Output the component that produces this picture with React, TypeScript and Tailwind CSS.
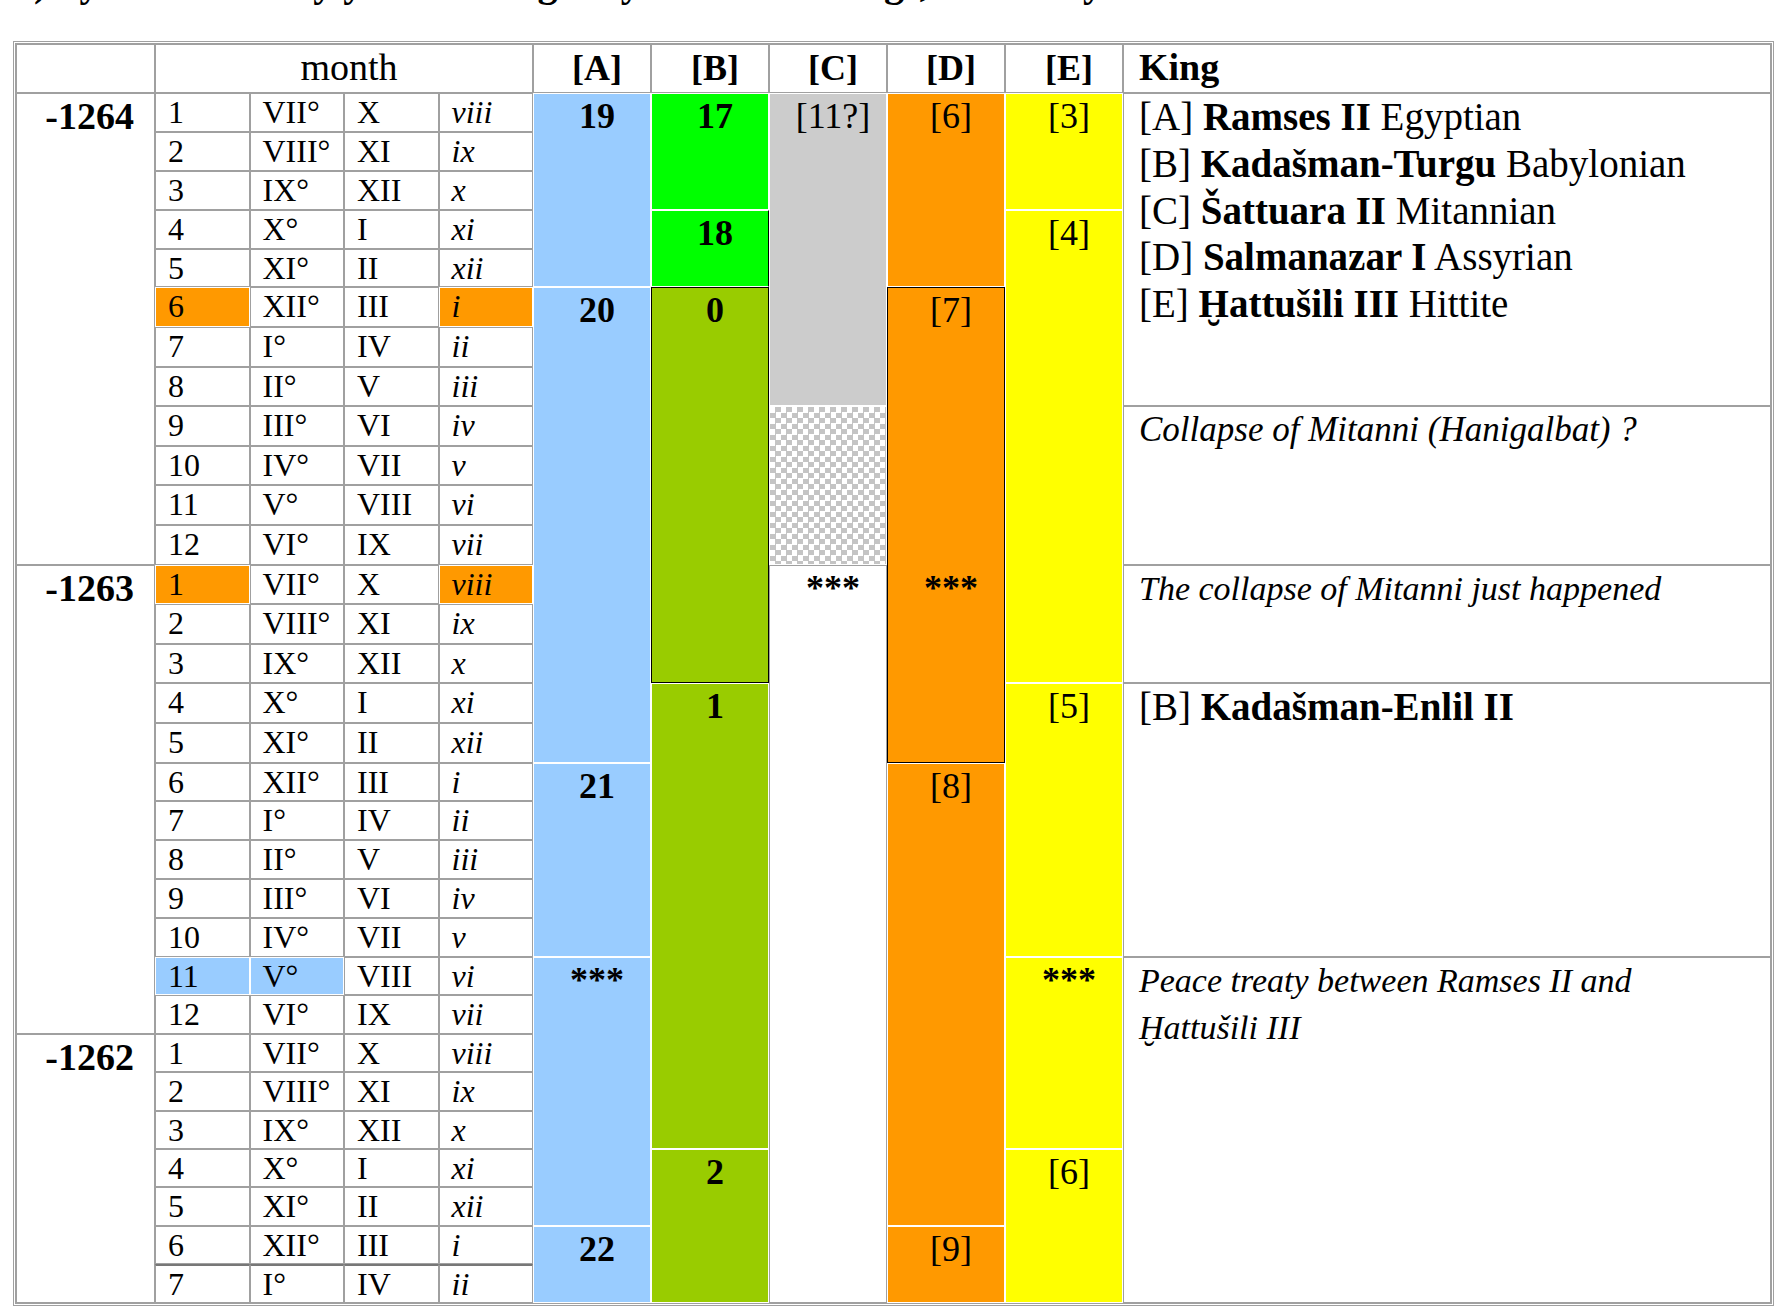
import React from 'react'

const MON2 = ['VII°', 'VIII°', 'IX°', 'X°', 'XI°', 'XII°', 'I°', 'II°', 'III°', 'IV°', 'V°', 'VI°']
const MON3 = ['X', 'XI', 'XII', 'I', 'II', 'III', 'IV', 'V', 'VI', 'VII', 'VIII', 'IX']
const MON4 = ['viii', 'ix', 'x', 'xi', 'xii', 'i', 'ii', 'iii', 'iv', 'v', 'vi', 'vii']

interface Block {
  place: string
  label?: string
  bold?: boolean
  cls: string
}

const BLUE = 'bg-[#99ccff] border-white'
const GREEN = 'bg-[#00ff00] border-white'
const OLIVE = 'bg-[#99cc00] border-white'
const ORANGE = 'bg-[#ff9900] border-white'
const YELLOW = 'bg-[#ffff00] border-white'
const CHECKER =
  'bg-[conic-gradient(#c4c4c4_25%,#ffffff_0_50%,#c4c4c4_0_75%,#ffffff_0)] bg-[length:11px_11px] border-white'

// reign blocks, placed on the body grid (col 6..10 = [A]..[E])
const blocks: Block[] = [
  { place: 'col-start-6 row-start-1 row-span-5', label: '19', bold: true, cls: BLUE },
  { place: 'col-start-6 row-start-6 row-span-12', label: '20', bold: true, cls: BLUE },
  { place: 'col-start-6 row-start-18 row-span-5', label: '21', bold: true, cls: BLUE },
  { place: 'col-start-6 row-start-23 row-span-7', label: '***', bold: true, cls: BLUE },
  { place: 'col-start-6 row-start-30 row-span-2', label: '22', bold: true, cls: BLUE },

  { place: 'col-start-7 row-start-1 row-span-3', label: '17', bold: true, cls: GREEN },
  { place: 'col-start-7 row-start-4 row-span-2', label: '18', bold: true, cls: 'bg-[#00ff00] border-white border-r-black' },
  { place: 'col-start-7 row-start-6 row-span-10', label: '0', bold: true, cls: 'bg-[#99cc00] border-black' },
  { place: 'col-start-7 row-start-16 row-span-12', label: '1', bold: true, cls: OLIVE },
  { place: 'col-start-7 row-start-28 row-span-4', label: '2', bold: true, cls: OLIVE },

  { place: 'col-start-8 row-start-1 row-span-8', label: '[11?]', cls: 'bg-[#cccccc] border-white' },
  { place: 'col-start-8 row-start-9 row-span-4', cls: CHECKER },
  { place: 'col-start-8 row-start-13 row-span-19', label: '***', bold: true, cls: 'bg-white border-[#a0a0a0]' },

  { place: 'col-start-9 row-start-1 row-span-5', label: '[6]', cls: ORANGE },
  { place: 'col-start-9 row-start-6 row-span-12', label: '[7]', cls: 'bg-[#ff9900] border-black' },
  { place: 'col-start-9 row-start-13 row-span-1', label: '***', bold: true, cls: 'border-transparent' },
  { place: 'col-start-9 row-start-18 row-span-12', label: '[8]', cls: ORANGE },
  { place: 'col-start-9 row-start-30 row-span-2', label: '[9]', cls: ORANGE },

  { place: 'col-start-10 row-start-1 row-span-3', label: '[3]', cls: YELLOW },
  { place: 'col-start-10 row-start-4 row-span-12', label: '[4]', cls: YELLOW },
  { place: 'col-start-10 row-start-16 row-span-7', label: '[5]', cls: YELLOW },
  { place: 'col-start-10 row-start-23 row-span-5', label: '***', bold: true, cls: YELLOW },
  { place: 'col-start-10 row-start-28 row-span-4', label: '[6]', cls: YELLOW },
]

const years = [
  { place: 'col-start-1 row-start-1 row-span-12', label: '-1264' },
  { place: 'col-start-1 row-start-13 row-span-12', label: '-1263' },
  { place: 'col-start-1 row-start-25 row-span-7', label: '-1262' },
]

function highlight(r: number, c: number) {
  if ((r === 5 || r === 12) && (c === 0 || c === 3)) return 'bg-[#ff9900] border-white'
  if (r === 22 && (c === 0 || c === 1)) return 'bg-[#99ccff] border-white'
  return 'bg-white border-[#a0a0a0]'
}

// month cells are auto-placed into the free slots (cols 2..5)
function monthCells() {
  const cells = []
  for (let r = 0; r < 31; r++) {
    const m = r % 12
    const vals = [String(m + 1), MON2[m], MON3[m], MON4[m]]
    for (let c = 0; c < 4; c++) {
      cells.push(
        <div
          key={`${r}-${c}`}
          className={`border pl-[12px] text-[32px] leading-[36px] whitespace-nowrap overflow-hidden ${highlight(r, c)} ${
            r === 30 ? 'border-t-2 border-t-[#777777]' : ''
          } ${c === 3 ? 'italic' : ''}`}
        >
          {vals[c]}
        </div>
      )
    }
  }
  return cells
}

function King({ tag, name, people }: { tag: string; name: string; people: string }) {
  return (
    <div className="whitespace-nowrap">
      {tag} <span className="font-bold">{name}</span> {people}
    </div>
  )
}

const kingCell = 'col-start-11 border border-[#a0a0a0] pl-[15px] leading-[46.75px]'

export default function App() {
  return (
    <div className="w-[1783px] min-h-[1311px] bg-white text-black font-['Liberation_Serif','DejaVu_Serif',serif]">
      <div className="h-[9px] overflow-hidden pl-[14px]">
        <div className="-mt-[38px] text-[40px] font-bold leading-[42px] whitespace-nowrap">
          2) Synchronism by year and regnal years of the kings, month by month
        </div>
      </div>

      <div className="ml-[13px] mt-[32px] w-[1761px] border-[3px] border-double border-[#a0a0a0]">
        {/* header */}
        <div className="flex h-[49px]">
          <div className="w-[139px] border border-[#a0a0a0]" />
          <div className="w-[378px] border border-[#a0a0a0] pl-[10px] text-center text-[38px] leading-[44px]">month</div>
          {['[A]', '[B]', '[C]', '[D]', '[E]'].map((h) => (
            <div key={h} className="w-[118px] border border-[#a0a0a0] pl-[10px] text-center text-[36px] font-bold leading-[46px]">
              {h}
            </div>
          ))}
          <div className="flex-1 border border-[#a0a0a0] pl-[15px] text-[38px] font-bold leading-[44px]">King</div>
        </div>

        {/* body */}
        <div className="grid grid-cols-[139px_repeat(4,94.5px)_repeat(5,118px)_1fr] grid-rows-[repeat(5,38.9px)_repeat(12,39.6px)_repeat(5,38.9px)_repeat(9,38.4px)]">
          {years.map((y) => (
            <div
              key={y.label}
              className={`${y.place} border border-[#a0a0a0] pr-[20px] pt-[2px] text-right text-[38px] font-bold leading-[41px]`}
            >
              {y.label}
            </div>
          ))}

          {blocks.map((b, i) => (
            <div key={i} className={`${b.place} border pl-[10px] pt-[2px] text-center text-[36px] leading-[41px] ${b.cls} ${b.bold ? 'font-bold' : ''}`}>
              {b.label}
            </div>
          ))}

          <div className={`${kingCell} row-start-1 row-span-8 text-[39px]`}>
            <King tag="[A]" name="Ramses II" people="Egyptian" />
            <King tag="[B]" name="Kadašman-Turgu" people="Babylonian" />
            <King tag="[C]" name="Šattuara II" people="Mitannian" />
            <King tag="[D]" name="Salmanazar I" people="Assyrian" />
            <King tag="[E]" name="Ḫattušili III" people="Hittite" />
          </div>
          <div className={`${kingCell} row-start-9 row-span-4 text-[35px] italic`}>Collapse of Mitanni (Hanigalbat) ?</div>
          <div className={`${kingCell} row-start-13 row-span-3 text-[34px] italic`}>The collapse of Mitanni just happened</div>
          <div className={`${kingCell} row-start-16 row-span-7 text-[39px]`}>
            [B] <span className="font-bold">Kadašman-Enlil II</span>
          </div>
          <div className={`${kingCell} row-start-23 row-span-9 text-[34px] italic`}>
            Peace treaty between Ramses II and
            <br />
            Ḫattušili III
          </div>

          {monthCells()}
        </div>
      </div>
    </div>
  )
}
